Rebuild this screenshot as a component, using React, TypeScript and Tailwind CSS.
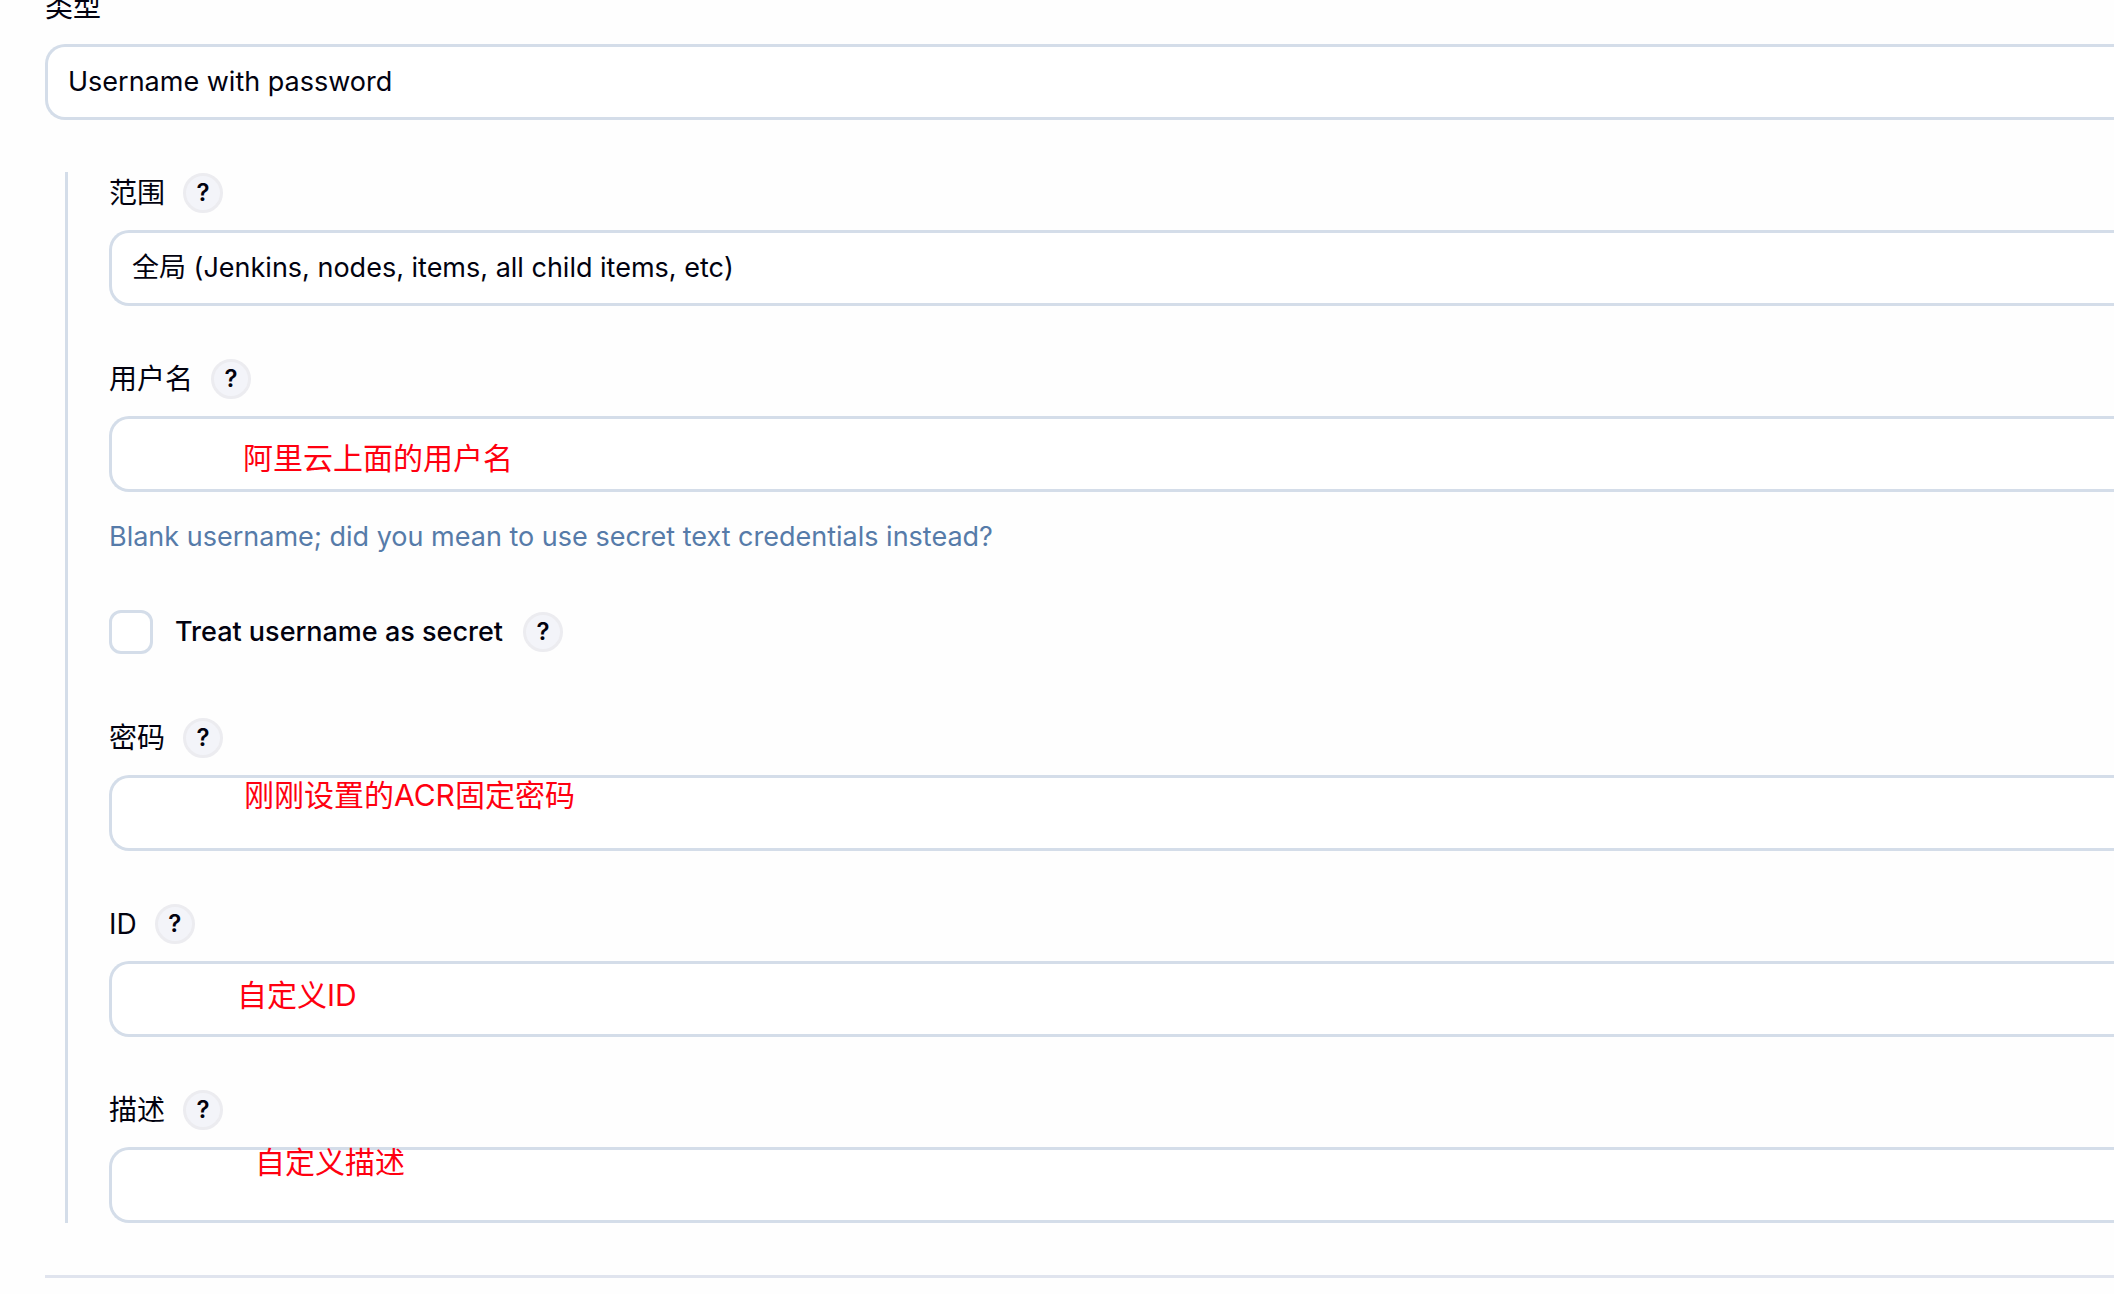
import { useState } from 'react'
import type { ReactNode } from 'react'

const CONTROL =
  'block w-full h-[76px] appearance-none rounded-l-[20px] border-3 border-r-0 border-[#d4dde9] bg-white px-5 text-[27px] outline-none'

function HelpButton({ topic }: { topic: string }) {
  return (
    <button
      type="button"
      aria-label={`Help for ${topic}`}
      className="flex size-10 items-center justify-center rounded-full border-3 border-[#ececf0] bg-[#f3f4f9] text-2xl leading-none font-semibold"
    >
      ?
    </button>
  )
}

function Field({ id, label, help = true, children }: {
  id: string
  label: string
  help?: boolean
  children: ReactNode
}) {
  return (
    <div>
      <div className="mb-4 flex h-[42px] items-center gap-[18px]">
        <label htmlFor={id}>{label}</label>
        {help && <HelpButton topic={label} />}
      </div>
      {children}
    </div>
  )
}

// Red annotation written over a text box
function Note({ className, children }: { className: string; children: ReactNode }) {
  return (
    <span
      className={`pointer-events-none absolute text-[30px] leading-10 whitespace-nowrap text-[#ff0010] ${className}`}
    >
      {children}
    </span>
  )
}

export default function App() {
  const [secret, setSecret] = useState(false)

  return (
    <main className="min-h-screen overflow-hidden bg-[#fefefe] pl-[45px] font-['Inter','Noto_Sans_CJK_SC',sans-serif] text-[28px] leading-[42px] text-[#02020f]">
      <form className="-mt-3.5 flex flex-col gap-[52px]">
        <Field id="kind" label="类型" help={false}>
          <select id="kind" className={CONTROL}>
            <option>Username with password</option>
          </select>
        </Field>

        <div className="ml-5 flex flex-col gap-[52px] border-l-3 border-[#d4dde9] pl-[41px]">
          <Field id="scope" label="范围">
            <select id="scope" className={CONTROL}>
              <option>全局 (Jenkins, nodes, items, all child items, etc)</option>
            </select>
          </Field>

          <Field id="username" label="用户名">
            <div className="relative">
              <input id="username" type="text" className={CONTROL} />
              <Note className="top-[22px] left-[134px]">阿里云上面的用户名</Note>
            </div>
            <p className="mt-6 text-[27px] text-[#567ba9]">
              Blank username; did you mean to use secret text credentials instead?
            </p>
          </Field>

          <div className="flex items-center pb-[11px]">
            <input
              id="secret"
              type="checkbox"
              checked={secret}
              onChange={(e) => setSecret(e.target.checked)}
              className="size-11 appearance-none rounded-xl border-3 border-[#d4dde9] bg-white checked:bg-[#567ba9]"
            />
            <label htmlFor="secret" className="mr-5 ml-[22px] text-[27px] font-medium">
              Treat username as secret
            </label>
            <HelpButton topic="Treat username as secret" />
          </div>

          <Field id="password" label="密码">
            <div className="relative">
              <input id="password" type="password" className={CONTROL} />
              <Note className="top-0 left-[135px]">刚刚设置的ACR固定密码</Note>
            </div>
          </Field>

          <Field id="cred-id" label="ID">
            <div className="relative">
              <input id="cred-id" type="text" className={CONTROL} />
              <Note className="top-[14px] left-[128px]">自定义ID</Note>
            </div>
          </Field>

          <Field id="description" label="描述">
            <div className="relative">
              <input id="description" type="text" className={CONTROL} />
              <Note className="top-[-5px] left-[146px]">自定义描述</Note>
            </div>
          </Field>
        </div>

        <hr className="border-t-3 border-[#e0e4ee]" />
      </form>
    </main>
  )
}
